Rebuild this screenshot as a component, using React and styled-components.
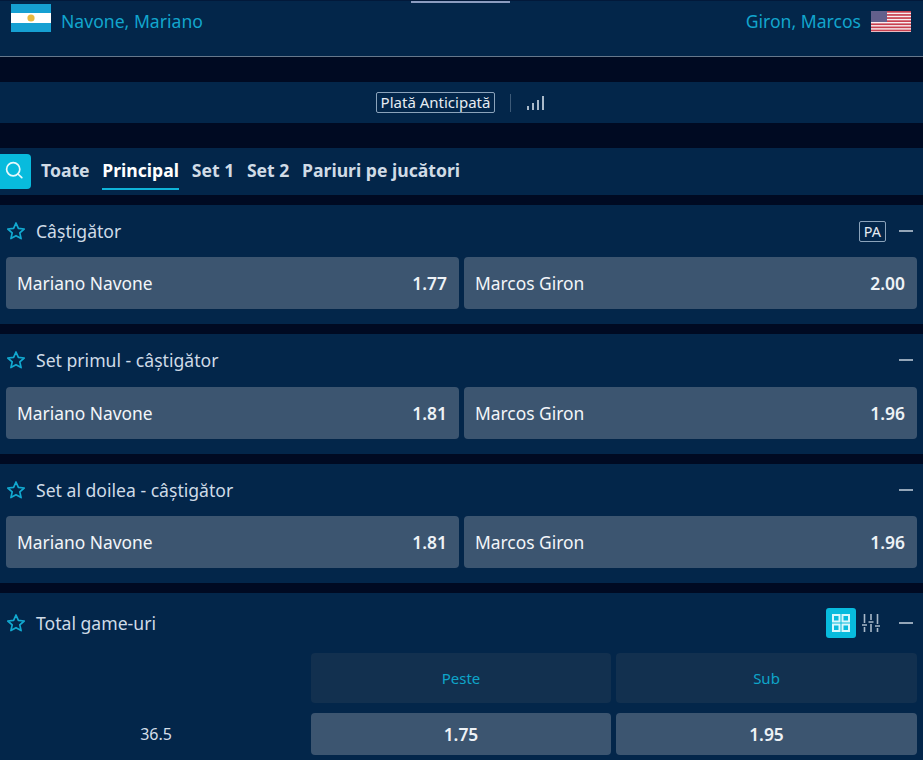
import React from 'react';
import styled, { createGlobalStyle } from 'styled-components';

const GlobalStyle = createGlobalStyle`
  html, body {
    margin: 0;
    padding: 0;
    background: #000a22;
    font-family: "Noto Sans", "Open Sans", sans-serif;
  }
  * { box-sizing: border-box; }
`;

const Page = styled.div`
  width: 923px;
  height: 760px;
  overflow: hidden;
  display: flex;
  flex-direction: column;
`;

const Header = styled.header`
  position: relative;
  height: 57px;
  flex: none;
  padding: 3px 12px 0 11px;
  display: flex;
  justify-content: space-between;
  align-items: flex-start;
  background: #03264a;
  border-top: 1px solid #02193a;
  border-bottom: 1px solid #66788c;
`;

const TopHandle = styled.div`
  position: absolute;
  top: 0;
  left: 411px;
  width: 99px;
  height: 2px;
  background: #8b9cc0;
`;

const Player = styled.div`
  display: flex;
  align-items: center;
  gap: 10px;
  height: 28px;
  font-size: 17.6px;
  color: #12a5cd;
`;

const PlayerName = styled.span`
  line-height: 24px;
  padding-top: 6px;
`;

const FlagSvg = styled.svg`
  display: block;
  width: 40px;
  height: 28px;
  flex: none;
`;

const InfoBar = styled.div`
  margin-top: 25px;
  height: 41px;
  flex: none;
  background: #03264a;
  display: flex;
  align-items: center;
  justify-content: center;
  padding-right: 2px;
  gap: 15px;
`;

const Badge = styled.span`
  display: inline-block;
  border: 1px solid #8ba3bb;
  border-radius: 2px;
  padding: 0 4px;
  font-size: ${props => props.$size || '15px'};
  line-height: 19px;
  color: #e6ecf2;
`;

const Divider = styled.span`
  width: 1px;
  height: 18px;
  background: #3d5a78;
`;

const TabsBar = styled.nav`
  margin-top: 25px;
  height: 47px;
  flex: none;
  background: #03264a;
  display: flex;
  align-items: center;
`;

const SearchButton = styled.div`
  width: 31px;
  height: 35px;
  margin-right: 10px;
  border-radius: 0 4px 4px 0;
  background: #08bbdd;
  display: flex;
  align-items: center;
  justify-content: center;
  color: #e8f9fc;
`;

const Tab = styled.div`
  height: 36px;
  margin-right: 12.7px;
  font-size: 17.6px;
  line-height: 33px;
  font-weight: 700;
  color: ${props => (props.$active ? '#ffffff' : '#d0dbe6')};
  border-bottom: 2px solid ${props => (props.$active ? '#0fb4d9' : 'transparent')};
`;

const Market = styled.section`
  margin-top: 10px;
  flex: none;
  height: ${props => props.$height}px;
  background: #03264a;
  padding: 0 6px;
`;

const MarketHead = styled.div`
  height: ${props => props.$height || 52}px;
  display: flex;
  align-items: center;
  gap: 10px;
`;

const Title = styled.div`
  flex: 1;
  font-size: 17.6px;
  line-height: 24px;
  color: #cfdbe7;
`;

const Actions = styled.div`
  display: flex;
  align-items: center;
  margin-right: 4px;
`;

const Collapse = styled.span`
  width: 14px;
  height: 2px;
  margin-left: 13px;
  background: #94a6b8;
`;

const OddsRow = styled.div`
  display: grid;
  grid-template-columns: 453px 453px;
  gap: 5px;
  margin-top: ${props => props.$top || 0}px;
`;

const OddButton = styled.div`
  height: 52px;
  padding: 0 12px 0 11px;
  border-radius: 4px;
  background: #3c5570;
  display: flex;
  align-items: center;
  justify-content: space-between;
  font-size: 17.4px;
  color: #f3f6f9;
`;

const OddValue = styled.span`
  font-weight: 600;
  font-size: 17.4px;
  color: #eef2f6;
`;

const ViewToggle = styled.div`
  width: 30px;
  height: 30px;
  border-radius: 3px;
  background: #08bbdd;
  display: flex;
  align-items: center;
  justify-content: center;
  color: #d8f7fc;
`;

const FilterIcon = styled.div`
  width: 30px;
  height: 30px;
  display: flex;
  align-items: center;
  justify-content: center;
  color: #a8b8c8;
`;

const TotalGrid = styled.div`
  display: grid;
  grid-template-columns: 300px 300px 301px;
  column-gap: 5px;
  row-gap: 10px;
`;

const ColumnHead = styled.div`
  grid-column: ${props => props.$col};
  height: 50px;
  border-radius: 4px;
  background: #12304f;
  display: flex;
  align-items: center;
  justify-content: center;
  font-size: 15px;
  color: #0ea5c9;
`;

const LineCell = styled.div`
  height: 42px;
  display: flex;
  align-items: center;
  justify-content: center;
  font-size: 16px;
  color: #d5dfe9;
`;

const TotalOdd = styled.div`
  height: 42px;
  border-radius: 4px;
  background: #3c5570;
  display: flex;
  align-items: center;
  justify-content: center;
  font-size: 17.4px;
  font-weight: 600;
  color: #eef2f6;
`;

const SearchSvg = styled.svg`
  margin: -3px 0 0 -4px;
`;

const ArgentinaFlag = () => (
  <FlagSvg viewBox="0 0 40 28">
    <rect width="40" height="28" fill="#16a0d2" />
    <rect y="9" width="40" height="10" fill="#ffffff" />
    <circle cx="20" cy="14" r="3.6" fill="#e8b93f" />
  </FlagSvg>
);

const UsaFlag = () => {
  const stripes = [];
  for (let i = 0; i < 7; i++) {
    stripes.push(<rect key={i} y={7 + i * 3.1} width="40" height="1.7" fill="#c8404f" />);
  }
  return (
    <FlagSvg viewBox="0 0 40 28">
      <rect y="7" width="40" height="21" fill="#f8eef0" />
      {stripes}
      <rect y="7" width="16" height="11" fill="#63608c" />
    </FlagSvg>
  );
};

const Star = () => (
  <svg width="20" height="20" viewBox="0 0 20 20" fill="none" stroke="#12a9d0" strokeWidth="1.7" strokeLinejoin="round">
    <path d="M10 2l2.4 5.4 5.8.6-4.4 3.9 1.3 5.7L10 14.7l-5.1 2.9 1.3-5.7L1.8 8l5.8-.6z" />
  </svg>
);

const Bars = () => (
  <svg width="19" height="16" viewBox="0 0 19 16" fill="none" stroke="#a9b9c9" strokeWidth="2">
    <path d="M2 15v-4M7 15V8M12 15V5M17 15V1" />
  </svg>
);

const Search = () => (
  <SearchSvg width="20" height="20" viewBox="0 0 20 20" fill="none" stroke="currentColor" strokeWidth="1.7" strokeLinecap="round">
    <circle cx="9.2" cy="9.2" r="6.6" />
    <path d="M14 14l3.8 3.6" />
  </SearchSvg>
);

const Grid = () => (
  <svg width="20" height="20" viewBox="0 0 20 20" fill="none" stroke="currentColor" strokeWidth="2">
    <rect x="2" y="2" width="6.5" height="6.5" />
    <rect x="11.5" y="2" width="6.5" height="6.5" />
    <rect x="2" y="11.5" width="6.5" height="6.5" />
    <rect x="11.5" y="11.5" width="6.5" height="6.5" />
  </svg>
);

const Sliders = () => (
  <svg width="20" height="20" viewBox="0 0 20 20" fill="none" stroke="currentColor" strokeWidth="1.6">
    <path d="M3.5 1v9M3.5 14v5M10 1v6M10 11v8M16.5 1v10M16.5 15v4M1 12h5M7.5 9h5M14 13h5" />
  </svg>
);

const Head = ({ title, height, children }) => (
  <MarketHead $height={height}>
    <Star />
    <Title>{title}</Title>
    <Actions>
      {children}
      <Collapse />
    </Actions>
  </MarketHead>
);

const Odds = ({ a, b, top }) => (
  <OddsRow $top={top}>
    <OddButton>Mariano Navone<OddValue>{a}</OddValue></OddButton>
    <OddButton>Marcos Giron<OddValue>{b}</OddValue></OddButton>
  </OddsRow>
);

export default function App() {
  return (
    <Page>
      <GlobalStyle />
      <Header>
        <TopHandle />
        <Player><ArgentinaFlag /><PlayerName>Navone, Mariano</PlayerName></Player>
        <Player><PlayerName>Giron, Marcos</PlayerName><UsaFlag /></Player>
      </Header>

      <InfoBar>
        <Badge>Plată Anticipată</Badge>
        <Divider />
        <Bars />
      </InfoBar>

      <TabsBar>
        <SearchButton><Search /></SearchButton>
        <Tab>Toate</Tab>
        <Tab $active>Principal</Tab>
        <Tab>Set 1</Tab>
        <Tab>Set 2</Tab>
        <Tab>Pariuri pe jucători</Tab>
      </TabsBar>

      <Market $height={119}>
        <Head title="Câștigător"><Badge $size="14.4px">PA</Badge></Head>
        <Odds a="1.77" b="2.00" />
      </Market>
      <Market $height={120}>
        <Head title="Set primul - câștigător" />
        <Odds a="1.81" b="1.96" top={1} />
      </Market>
      <Market $height={119}>
        <Head title="Set al doilea - câștigător" />
        <Odds a="1.81" b="1.96" />
      </Market>
      <Market $height={170}>
        <Head title="Total game-uri" height={60}>
          <ViewToggle><Grid /></ViewToggle>
          <FilterIcon><Sliders /></FilterIcon>
        </Head>
        <TotalGrid>
          <ColumnHead $col={2}>Peste</ColumnHead>
          <ColumnHead $col={3}>Sub</ColumnHead>
          <LineCell>36.5</LineCell>
          <TotalOdd>1.75</TotalOdd>
          <TotalOdd>1.95</TotalOdd>
        </TotalGrid>
      </Market>
    </Page>
  );
}
